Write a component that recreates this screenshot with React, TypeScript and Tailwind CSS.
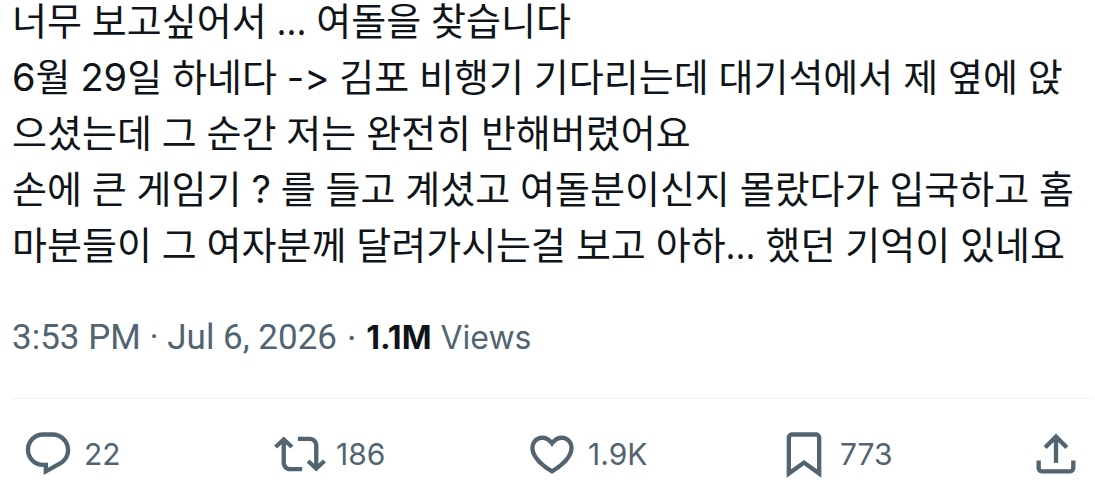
import type { ReactNode } from "react";

const body = [
  "너무 보고싶어서 ... 여돌을 찾습니다",
  "6월 29일 하네다 -> 김포 비행기 기다리는데 대기석에서 제 옆에 앉",
  "으셨는데 그 순간 저는 완전히 반해버렸어요",
  "손에 큰 게임기 ? 를 들고 계셨고 여돌분이신지 몰랐다가 입국하고 홈",
  "마분들이 그 여자분께 달려가시는걸 보고 아하... 했던 기억이 있네요",
];

const actions = [
  {
    label: "Reply",
    count: "22",
    path: "M1.751 10c0-4.42 3.584-8 8.005-8h4.366c4.49 0 8.129 3.64 8.129 8.13 0 2.96-1.607 5.68-4.196 7.11l-8.054 4.46v-3.69h-.067c-4.49.1-8.183-3.51-8.183-8.01zm8.005-6c-3.317 0-6.005 2.69-6.005 6 0 3.37 2.77 6.08 6.138 6.01l.351-.01h1.761v2.3l5.087-2.81c1.951-1.08 3.163-3.13 3.163-5.36 0-3.39-2.744-6.13-6.129-6.13H9.756z",
  },
  {
    label: "Repost",
    count: "186",
    path: "M4.5 3.88l4.432 4.14-1.364 1.46L5.5 7.55V16c0 1.1.896 2 2 2H13v2H7.5c-2.209 0-4-1.79-4-4V7.55L1.432 9.48.068 8.02 4.5 3.88zM16.5 6H11V4h5.5c2.209 0 4 1.79 4 4v8.45l2.068-1.93 1.364 1.46-4.432 4.14-4.432-4.14 1.364-1.46 2.068 1.93V8c0-1.1-.896-2-2-2z",
  },
  {
    label: "Like",
    count: "1.9K",
    path: "M16.697 5.5c-1.222-.06-2.679.51-3.89 2.16l-.805 1.09-.806-1.09C9.984 6.01 8.526 5.44 7.304 5.5c-1.243.07-2.349.78-2.91 1.91-.552 1.12-.633 2.78.479 4.82 1.074 1.97 3.257 4.27 7.129 6.61 3.87-2.34 6.052-4.64 7.126-6.61 1.111-2.04 1.03-3.7.477-4.82-.561-1.13-1.666-1.84-2.908-1.91zm4.187 7.69c-1.351 2.48-4.001 5.12-8.379 7.67l-.503.3-.504-.3c-4.379-2.55-7.029-5.19-8.382-7.67-1.36-2.5-1.41-4.86-.514-6.67.887-1.79 2.647-2.91 4.601-3.01 1.651-.09 3.368.56 4.798 2.01 1.429-1.45 3.146-2.1 4.796-2.01 1.954.1 3.714 1.22 4.601 3.01.896 1.81.846 4.17-.514 6.67z",
  },
  {
    label: "Bookmark",
    count: "773",
    path: "M4 4.5C4 3.12 5.119 2 6.5 2h11C18.881 2 20 3.12 20 4.5v18.44l-8-5.71-8 5.71V4.5zM6.5 4c-.276 0-.5.22-.5.5v14.56l6-4.29 6 4.29V4.5c0-.28-.224-.5-.5-.5h-11z",
  },
];

const sharePath =
  "M12 2.59l5.7 5.7-1.41 1.42L13 6.41V16h-2V6.41l-3.3 3.3-1.41-1.42L12 2.59zM21 15l-.02 3.51c0 1.38-1.12 2.49-2.5 2.49H5.5C4.11 21 3 19.88 3 18.5V15h2v3.5c0 .28.22.5.5.5h12.98c.28 0 .5-.22.5-.5L19 15h2z";

// Digits and signs are set in the wider Latin face, the rest follows the paragraph.
function MixedText({ text }: { text: string }) {
  return text.split(/([\d?>-]+)/).map((part, i) =>
    i % 2 ? (
      <span key={i} className="font-['Inter',sans-serif] leading-none">
        {part}
      </span>
    ) : (
      part
    )
  );
}

function ActionButton({ label, path, children }: { label: string; path: string; children?: ReactNode }) {
  return (
    <button type="button" aria-label={label} className="flex items-center gap-2.5">
      <svg viewBox="0 0 24 24" className="size-[52px] shrink-0 fill-current" aria-hidden="true">
        <path d={path} />
      </svg>
      {children}
    </button>
  );
}

export default function App() {
  return (
    <article className="flow-root bg-white pr-[3px] pl-3 font-['Inter',sans-serif] text-[#536471]">
      <p className="-mt-2 font-['Open_Sans','Noto_Sans_CJK_KR',sans-serif] text-[38px] leading-[56px] text-[#0f1419]">
        {body.map((line) => (
          <span key={line} className="block whitespace-nowrap">
            <MixedText text={line} />
          </span>
        ))}
      </p>

      <div className="mt-10 flex items-baseline gap-2.5 text-[32px] leading-[52px] whitespace-nowrap">
        <a href="#post" className="font-['Roboto',sans-serif] text-[35px]">
          <time dateTime="2026-07-06T15:53">3:53 PM · Jul 6, 2026</time>
        </a>
        <span>·</span>
        <span>
          <strong className="font-bold text-[#0f1419]">1.1M</strong> Views
        </span>
      </div>

      <div className="mt-[34px] flex border-t border-[#eff3f4] px-[10px] pt-[29px] pb-[11px]">
        {actions.map(({ label, count, path }) => (
          <div key={label} className="flex flex-1">
            <ActionButton label={label} path={path}>
              <span className="text-[30px] leading-10">{count}</span>
            </ActionButton>
          </div>
        ))}
        <ActionButton label="Share" path={sharePath} />
      </div>
    </article>
  );
}
